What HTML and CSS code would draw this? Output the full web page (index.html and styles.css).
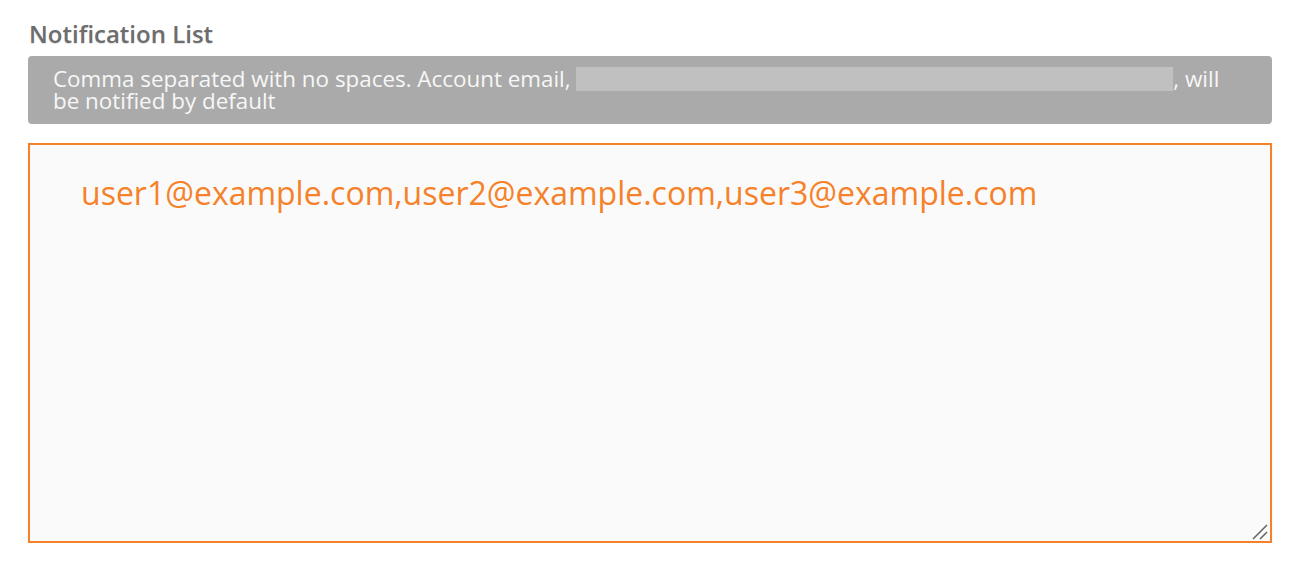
FILE: index.html
```html
<!DOCTYPE html>
<html>
<head>
<meta charset="utf-8">
<title>Notification List</title>
<link rel="stylesheet" href="styles.css">
</head>
<body>
<div class="field">
	<label class="field-label" for="notify">Notification List</label>
	<div class="hint">Comma separated with no spaces. Account email, <span class="redacted"></span>, will<br>be notified by default</div>
	<div class="box-wrap">
		<textarea id="notify" class="notify-box">user1@example.com,user2@example.com,user3@example.com</textarea>
		<svg class="grip" width="18" height="18" viewBox="0 0 18 18">
			<line x1="2" y1="17" x2="16" y2="3" stroke="#666" stroke-width="1.6"/>
			<line x1="9" y1="17" x2="16" y2="10" stroke="#666" stroke-width="1.6"/>
		</svg>
	</div>
</div>
</body>
</html>
```

FILE: styles.css
```css
body {
	margin: 0;
	background-color: #ffffff;
	font-family: "Open Sans", "Liberation Sans", sans-serif;
}
.field {
	padding: 20px 29px 0 28px;
	display: flex;
	flex-direction: column;
}
.field-label {
	color: #6d6d6d;
	font-size: 24px;
	font-weight: 600;
	line-height: 28px;
	padding-left: 1px;
	margin-bottom: 8px;
	text-shadow: 0 1px 1px rgba(0, 0, 0, 0.12);
}
.hint {
	background-color: #aaaaaa;
	color: #f7f7f7;
	font-size: 22.4px;
	line-height: 22px;
	padding: 12px 25px 12px 25px;
	border-radius: 4px;
}
.redacted {
	display: inline-block;
	width: 597px;
	height: 24px;
	margin: -1px 0;
	vertical-align: top;
	background-color: #c0c0c0;
}
.box-wrap {
	position: relative;
	margin-top: 19px;
	display: flex;
}
.notify-box {
	flex: 1;
	height: 400px;
	box-sizing: border-box;
	border: 2px solid #f5822a;
	background-color: #fafafa;
	color: #f5822a;
	font-family: "Open Sans", "Liberation Sans", sans-serif;
	font-size: 32px;
	line-height: 40px;
	padding: 28px 51px;
	outline: none;
	resize: none;
	box-shadow: 0 1px 2px rgba(0, 0, 0, 0.08);
}
.grip {
	position: absolute;
	right: 3px;
	bottom: 3px;
	pointer-events: none;
}
```
